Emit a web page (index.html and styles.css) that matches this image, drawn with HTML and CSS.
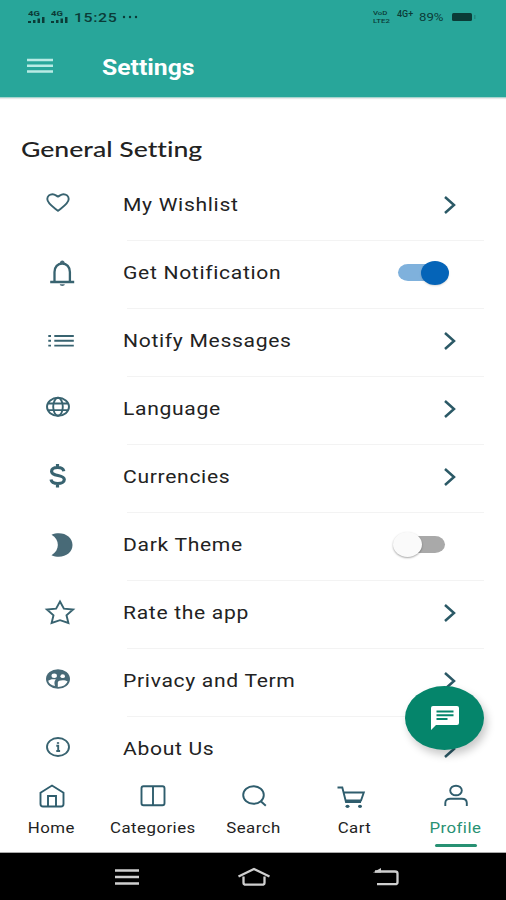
FILE: index.html
```html
<!DOCTYPE html>
<html lang="en">
<head>
    <meta charset="UTF-8">
    <meta name="viewport" content="width=device-width, initial-scale=1">
    <title>Settings</title>
    <link rel="stylesheet" href="styles.css">
</head>
<body>
    <header class="header">
        <div class="status">
            <div class="status-left">
                <span class="signal"><span class="net">4G</span><svg width="17" height="6" viewBox="0 0 17 6"><path d="M0 4h3v2H0zM5 3h2.500v3H5zM9.500 1.500h2.500v4.500H9.500zM14 0h2.500v6H14z"/></svg></span>
                <span class="signal"><span class="net">4G</span><svg width="17" height="6" viewBox="0 0 17 6"><path d="M0 4h3v2H0zM5 3h2.500v3H5zM9.500 1.500h2.500v4.500H9.500zM14 0h2.500v6H14z"/></svg></span>
                <span class="clock">15:25</span>
                <svg class="dots" width="16" height="4" viewBox="0 0 16 4"><circle cx="2" cy="2" r="1.200"/><circle cx="8" cy="2" r="1.200"/><circle cx="14" cy="2" r="1.200"/></svg>
            </div>
            <div class="status-right">
                <span class="volte"><span>VoD</span><span>LTE2</span></span>
                <span class="net4">4G+</span>
                <span class="percent">89%</span>
                <svg width="24" height="8" viewBox="0 0 24 8"><rect width="20" height="8" rx="1.500"/><rect x="22" y="2" width="1.500" height="4" opacity=".25"/></svg>
            </div>
        </div>
        <div class="title-bar">
            <svg class="menu" width="26" height="16" viewBox="0 0 26 16"><path d="M0 2h26M0 7.800h26M0 13.500h26"/></svg>
            <h1 class="title">Settings</h1>
        </div>
    </header>

    <main class="content">
        <h2 class="section"><span>General Setting</span></h2>

        <div class="row">
            <svg class="icon" viewBox="0 0 40 32"><path d="M18 21.800C13 17.800 7.300 14.500 7.300 10C7.300 7.200 9.800 5.200 12.600 5.200C15 5.200 16.500 7 18 7.500C19.500 7 21 5.200 23.400 5.200C26.200 5.200 28.700 7.200 28.700 10C28.700 14.500 23 17.800 18 21.800Z"/></svg>
            <div class="item"><span class="label">My Wishlist</span><svg class="arrow" viewBox="0 0 14 20"><path d="M2 2l9 8-9 8"/></svg></div>
        </div>
        <div class="row">
            <svg class="icon bell" viewBox="0 0 40 32"><path d="M10.200 25h24M14.500 24.500V15c0-5 3.200-8.500 7.700-8.500s7.700 3.500 7.700 8.500v9.500"/><path class="fill" d="M19.800 6.500c0-4 5-4 5 0zM19.800 27.200h5c0 2.300-5 2.300-5 0z"/></svg>
            <div class="item"><span class="label">Get Notification</span><span class="switch on"></span></div>
        </div>
        <div class="row">
            <svg class="icon" viewBox="0 0 40 32"><path d="M8.300 11h2.700M8.300 15.800h2.700M8.300 20.600h2.700M14.300 11h19.500M14.300 15.800h19.500M14.300 20.600h19.500"/></svg>
            <div class="item"><span class="label">Notify Messages</span><svg class="arrow" viewBox="0 0 14 20"><path d="M2 2l9 8-9 8"/></svg></div>
        </div>
        <div class="row">
            <svg class="icon" viewBox="0 0 40 32"><ellipse cx="18" cy="13.800" rx="11" ry="9"/><ellipse cx="18" cy="13.800" rx="4.800" ry="9"/><path d="M8 10.500h20M8 17.100h20"/></svg>
            <div class="item"><span class="label">Language</span><svg class="arrow" viewBox="0 0 14 20"><path d="M2 2l9 8-9 8"/></svg></div>
        </div>
        <div class="row">
            <svg class="icon dollar" viewBox="0 0 40 32"><path d="M17.500 3v4M17.500 22v4.500M23.800 10.200c-.5-2.500-3-3.700-6.200-3.700c-3.500 0-6 1.400-6 3.900c0 5.400 12.700 2.800 12.700 8c0 2.600-2.800 4.100-6.500 4.100c-3.500 0-6.300-1.300-6.800-4"/></svg>
            <div class="item"><span class="label">Currencies</span><svg class="arrow" viewBox="0 0 14 20"><path d="M2 2l9 8-9 8"/></svg></div>
        </div>
        <div class="row">
            <svg class="icon" viewBox="0 0 40 32"><path class="fill" d="M11.500 5.800C22 1.500 32.500 7 32.500 16S22 30.500 11.500 26.200C20 21.500 20 10.500 11.500 5.800Z"/></svg>
            <div class="item"><span class="label">Dark Theme</span><span class="switch"></span></div>
        </div>
        <div class="row">
            <svg class="icon" viewBox="0 0 40 32"><path d="M20 4.500l3.900 7.100 9.200.9-6.600 5.800 1.900 7.700L20 23.200 11.600 26l1.900-7.700-6.600-5.800 9.200-.9z"/></svg>
            <div class="item"><span class="label">Rate the app</span><svg class="arrow" viewBox="0 0 14 20"><path d="M2 2l9 8-9 8"/></svg></div>
        </div>
        <div class="row">
            <svg class="icon" viewBox="0 0 40 32"><ellipse class="fill" cx="18" cy="14" rx="12" ry="9.800"/><ellipse class="cut" cx="14.200" cy="10.800" rx="2.700" ry="2.200"/><ellipse class="cut" cx="22.700" cy="11.200" rx="2.300" ry="1.900"/><path class="cut" d="M8.200 15.800c1.800-1.800 5.300-2 7.800-1.200c-1.700 1.300-2 3-1 6.500c-4-.8-6.500-2.600-6.800-5.300zM17.800 22v-4.500c0-3 7.700-2.800 9.700-1.200c-1 3.500-4.800 5.600-9.700 5.700z"/></svg>
            <div class="item"><span class="label">Privacy and Term</span><svg class="arrow" viewBox="0 0 14 20"><path d="M2 2l9 8-9 8"/></svg></div>
        </div>
        <div class="row">
            <svg class="icon" viewBox="0 0 40 32"><ellipse cx="18" cy="14" rx="11" ry="9"/><path d="M16.300 12.700H18.200V18M16.300 18h3.800"/><ellipse class="fill" cx="18" cy="9.900" rx="1.300" ry="1"/></svg>
            <div class="item"><span class="label">About Us</span><svg class="arrow" viewBox="0 0 14 20"><path d="M2 2l9 8-9 8"/></svg></div>
        </div>

        <div class="chat">
            <svg width="32" height="26" viewBox="0 0 32 26"><path d="M4 1h24q2 0 2 2v15q0 2-2 2H7l-5 5V3q0-2 2-2z"/><path class="lines" d="M7.500 6.500h17M7.500 10.200h17M7.500 14h11"/></svg>
        </div>
    </main>

    <nav class="tabs">
        <a class="tab">
            <svg viewBox="0 0 30 26"><path d="M3.500 9.700L15 2.500l11.500 7.200V21q0 2.500-2.500 2.500H6q-2.500 0-2.500-2.500zM11 23V13h8v10"/></svg>
            <span>Home</span>
        </a>
        <a class="tab">
            <svg viewBox="0 0 30 26"><rect x="3.500" y="3.300" width="23" height="19" rx="2"/><path d="M15 3.500v19"/></svg>
            <span>Categories</span>
        </a>
        <a class="tab">
            <svg viewBox="0 0 30 26"><ellipse cx="14.500" cy="12" rx="10.300" ry="8.800"/><path d="M21.800 18.200l5 4.500"/></svg>
            <span>Search</span>
        </a>
        <a class="tab">
            <svg class="cart" viewBox="0 0 30 26"><path d="M.5 4.500h4.800L9 19h15M6.800 9.500h20L24 17.500H8.800"/><ellipse class="fill" cx="10.500" cy="23.300" rx="2" ry="1.600"/><ellipse class="fill" cx="23" cy="23.300" rx="2" ry="1.600"/></svg>
            <span>Cart</span>
        </a>
        <a class="tab active">
            <svg viewBox="0 0 30 26"><ellipse cx="15" cy="7.500" rx="5.800" ry="4.800"/><path d="M4.300 23V20c0-3 2-4.300 5-4.300h11.500c3 0 5 1.300 5 4.300v3"/></svg>
            <span>Profile</span>
        </a>
    </nav>

    <footer class="system">
        <svg width="26" height="18" viewBox="0 0 26 18"><path d="M1 2.500h24M1 9h24M1 15.500h24"/></svg>
        <svg class="home-key" width="34" height="20" viewBox="0 0 34 20"><path d="M1.500 9.500L17 2l15.500 7.500M6.500 9.500v6.200q0 2 2.500 2h16q2.500 0 2.500-2V9.500"/></svg>
        <svg width="28" height="20" viewBox="0 0 28 20"><path d="M2 4.500h20q2.500 0 2.500 2v8.700q0 2-2.500 2H4"/><path class="head" d="M0 5.500L8 1v4.500z"/></svg>
    </footer>
</body>
</html>
```

FILE: styles.css
```css
* {
    box-sizing: border-box;
}

body {
    margin: 0;
    width: 506px;
    height: 900px;
    display: flex;
    flex-direction: column;
    overflow: hidden;
    background: #fff;
    font-family: Roboto, sans-serif;
    color: #222;
}

svg {
    display: block;
    flex: none;
}

/* Header */
.header {
    height: 98px;
    flex: none;
    background: #28a69a;
    border-bottom: 1px solid #a5d5cf;
    box-shadow: 0 1px 1px #e8e8e8;
}

.status {
    height: 34px;
    padding: 0 30px 0 28px;
    display: flex;
    align-items: center;
    justify-content: space-between;
    color: #0b3b37;
    fill: #0b3b37;
}

.status-left,
.status-right {
    display: flex;
    align-items: center;
}

.signal {
    width: 17px;
    margin-right: 6px;
}

.net {
    display: block;
    font-size: 7px;
    line-height: 6px;
    font-weight: bold;
    transform: scaleX(1.35);
    transform-origin: left;
}

.clock {
    width: 43px;
    margin-right: 5px;
    font-size: 13px;
    font-weight: 500;
    letter-spacing: 0.5px;
    transform: scaleX(1.22);
    transform-origin: left;
}

.volte {
    width: 19px;
    margin-right: 5px;
    display: flex;
    flex-direction: column;
    font-size: 6px;
    line-height: 8px;
    font-weight: 500;
    transform: scaleX(1.3);
    transform-origin: left;
}

.net4 {
    width: 22px;
    font-size: 8.5px;
    line-height: 12px;
    font-weight: 500;
    transform: scaleX(1.05) translateY(-3px);
    transform-origin: left;
}

.percent {
    width: 33px;
    font-size: 11px;
    transform: scaleX(1.2);
    transform-origin: left;
}

.title-bar {
    height: 63px;
    padding-left: 27px;
    display: flex;
    align-items: center;
}

.menu {
    margin-right: 49px;
    fill: none;
    stroke: #b9ebe5;
    stroke-width: 2.6;
}

.title {
    margin: 3px 0 0;
    font-size: 21.5px;
    font-weight: 700;
    color: #fff;
    transform: scaleX(1.15);
    transform-origin: left;
}

/* Settings list */
.content {
    position: relative;
    height: 671px;
    flex: none;
    overflow: hidden;
}

.section {
    height: 75px;
    margin: 0;
    padding: 37px 0 0 21px;
    font-family: Lato, sans-serif;
    font-size: 22px;
    line-height: 27px;
    font-weight: 500;
    font-variant-ligatures: none;
}

.section span {
    display: inline-block;
    transform: scaleX(1.21);
    transform-origin: left;
}

.row {
    height: 68px;
    display: flex;
    padding: 0 22px 0 40px;
}

.icon {
    width: 40px;
    height: 32px;
    margin: 16px 47px 0 0;
    fill: none;
    stroke: #386370;
    stroke-width: 1.9;
}

.icon .fill {
    fill: #486a77;
    stroke: none;
}

.icon .cut {
    fill: #fff;
    stroke: none;
}

.bell {
    stroke-width: 2.3;
}

.dollar {
    stroke-width: 3.2;
}

.item {
    flex: 1;
    display: flex;
    align-items: center;
    justify-content: space-between;
    padding-bottom: 4px;
    border-bottom: 1px solid #f3f3f3;
}

.label {
    margin-left: -4px;
    font-size: 18.5px;
    line-height: 24px;
    letter-spacing: 0.6px;
    white-space: nowrap;
    transform: scaleX(1.14);
    transform-origin: left;
}

.arrow {
    width: 14px;
    height: 20px;
    margin-right: 27px;
    fill: none;
    stroke: #2b5966;
    stroke-width: 2.5;
}

/* Toggle, off by default */
.switch {
    width: 46px;
    height: 17px;
    margin-right: 39px;
    display: flex;
    align-items: center;
    background: #a9a9a9;
    border-radius: 10px / 8.5px;
}

.switch::before {
    content: "";
    width: 29px;
    height: 25px;
    margin-left: -6px;
    flex: none;
    border-radius: 50%;
    background: #fafafa;
    box-shadow: 0 1px 2px rgba(0, 0, 0, 0.35);
}

.switch.on {
    width: 50px;
    margin-right: 36px;
    background: #7fb1dc;
    justify-content: flex-end;
}

.switch.on::before {
    width: 28px;
    height: 24px;
    margin: 0 -1px 0 0;
    background: #0564b8;
    box-shadow: 0 1px 2px rgba(0, 0, 0, 0.15);
}

.chat {
    position: absolute;
    left: 405px;
    top: 588px;
    width: 79px;
    height: 64px;
    display: flex;
    align-items: center;
    justify-content: center;
    border-radius: 50%;
    background: #05856b;
    box-shadow: 3px 5px 9px rgba(0, 0, 0, 0.22);
    fill: #fff;
}

.chat .lines {
    stroke: #05856b;
    stroke-width: 2;
}

/* Bottom tabs */
.tabs {
    height: 84px;
    flex: none;
    display: grid;
    grid-template-columns: repeat(5, 101px);
    padding: 14px 0 0 1px;
    border-bottom: 1px solid #aaa;
}

.tab {
    display: flex;
    flex-direction: column;
    align-items: center;
    font-size: 14.5px;
    line-height: 20px;
    letter-spacing: 0.4px;
}

.tab svg {
    width: 30px;
    height: 26px;
    margin-bottom: 10px;
    fill: none;
    stroke: #2f5d6d;
    stroke-width: 1.9;
}

.tab svg.cart {
    margin-right: 6px;
}

.tab svg .fill {
    fill: #2f5d6d;
    stroke: none;
}

.tab span {
    transform: scaleX(1.16);
}

.tab.active {
    color: #289173;
}

.tab.active::after {
    content: "";
    width: 42px;
    height: 3px;
    margin-top: 5px;
    border-radius: 2px;
    background: #289173;
}

/* System buttons */
.system {
    height: 47px;
    flex: none;
    display: flex;
    justify-content: space-between;
    align-items: center;
    padding: 0 105px 0 114px;
    background: #000;
    fill: none;
    stroke: #cfcfcf;
    stroke-width: 2.3;
}

.home-key {
    margin-right: 6px;
}

.system .head {
    fill: #cfcfcf;
    stroke: none;
}
```
